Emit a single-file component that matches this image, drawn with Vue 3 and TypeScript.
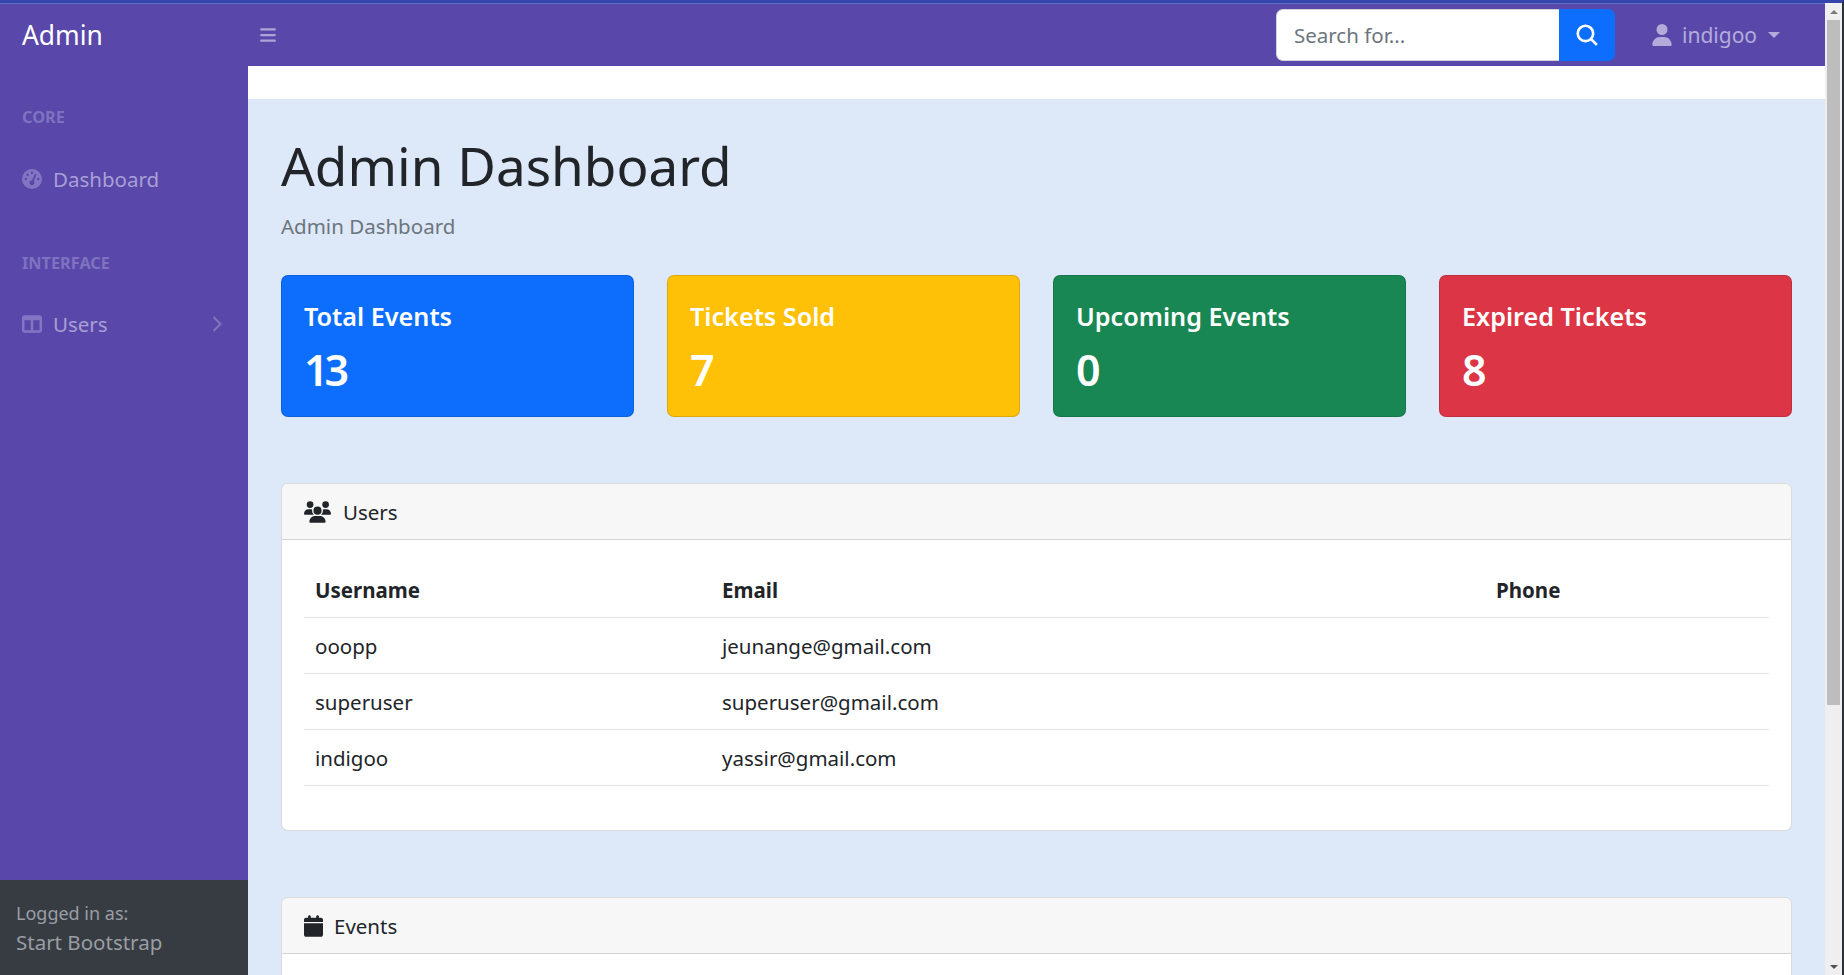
<script setup lang="ts">
interface Stat {
  title: string;
  value: number;
  tone: string;
}

const stats: Stat[] = [
  { title: "Total Events", value: 13, tone: "primary" },
  { title: "Tickets Sold", value: 7, tone: "warning" },
  { title: "Upcoming Events", value: 0, tone: "success" },
  { title: "Expired Tickets", value: 8, tone: "danger" }
];

const users = [
  { username: "ooopp", email: "jeunange@gmail.com", phone: "" },
  { username: "superuser", email: "superuser@gmail.com", phone: "" },
  { username: "indigoo", email: "yassir@gmail.com", phone: "" }
];
</script>

<template>
  <div class="window">
    <div class="page">
      <header class="topnav">
        <a class="brand">Admin</a>
        <button class="toggle" type="button" aria-label="Toggle sidebar">
          <svg viewBox="0 0 448 512" width="16" height="18" fill="currentColor"><path d="M0 96C0 78.3 14.3 64 32 64H416c17.7 0 32 14.3 32 32s-14.3 32-32 32H32C14.3 128 0 113.7 0 96zM0 256c0-17.7 14.3-32 32-32H416c17.7 0 32 14.3 32 32s-14.3 32-32 32H32c-17.7 0-32-14.3-32-32zM448 416c0 17.7-14.3 32-32 32H32c-17.7 0-32-14.3-32-32s14.3-32 32-32H416c17.7 0 32 14.3 32 32z" /></svg>
        </button>
        <form class="search" @submit.prevent>
          <input class="search-input" type="text" placeholder="Search for..." />
          <button class="search-btn" type="submit" aria-label="Search">
            <svg viewBox="0 0 20 20" width="22" height="22" fill="none" stroke="currentColor" stroke-width="2.4"><circle cx="8.6" cy="8.6" r="7" /><path d="M13.6 13.6 19 19" /></svg>
          </button>
        </form>
        <a class="user-menu">
          <svg viewBox="0 0 448 512" width="20" height="22" fill="currentColor"><path d="M224 256A128 128 0 1 0 224 0a128 128 0 1 0 0 256zm-45.7 48C79.8 304 0 383.8 0 482.3C0 498.7 13.3 512 29.7 512H418.3c16.4 0 29.7-13.3 29.7-29.7C448 383.8 368.2 304 269.7 304H178.3z" /></svg>
          <span>indigoo</span>
          <i class="caret"></i>
        </a>
      </header>

      <div class="body">
        <aside class="sidenav">
          <nav class="menu">
            <div class="menu-heading">CORE</div>
            <a class="menu-link">
              <svg class="menu-icon" viewBox="0 0 512 512" width="20" height="20" fill="currentColor"><path d="M0 256a256 256 0 1 1 512 0A256 256 0 1 1 0 256zM288 96a32 32 0 1 0 -64 0 32 32 0 1 0 64 0zM256 416c35.3 0 64-28.7 64-64c0-17.4-6.9-33.1-18.1-44.6L366 161.7c5.3-12.1-.2-26.3-12.3-31.6s-26.3 .2-31.6 12.3L257.9 288c-.6 0-1.3 0-1.9 0c-35.3 0-64 28.7-64 64s28.7 64 64 64zM176 144a32 32 0 1 0 -64 0 32 32 0 1 0 64 0zM96 288a32 32 0 1 0 0-64 32 32 0 1 0 0 64zm352-32a32 32 0 1 0 -64 0 32 32 0 1 0 64 0z" /></svg>
              <span>Dashboard</span>
            </a>
            <div class="menu-heading">INTERFACE</div>
            <a class="menu-link">
              <svg class="menu-icon" viewBox="0 0 512 512" width="20" height="20" fill="currentColor"><path d="M0 96C0 60.7 28.7 32 64 32H448c35.3 0 64 28.7 64 64V416c0 35.3-28.7 64-64 64H64c-35.3 0-64-28.7-64-64V96zm64 64V416H224V160H64zm384 0H288V416H448V160z" /></svg>
              <span>Users</span>
              <svg class="chevron" viewBox="0 0 10 16" width="10" height="16" fill="none" stroke="currentColor" stroke-width="2"><path d="m1.5 1 7 7-7 7" /></svg>
            </a>
          </nav>
          <div class="sidenav-footer">
            <div class="small">Logged in as:</div>
            <div>Start Bootstrap</div>
          </div>
        </aside>

        <main class="content">
          <div class="strip"></div>
          <div class="container">
            <h1>Admin Dashboard</h1>
            <p class="crumb">Admin Dashboard</p>

            <section class="stats">
              <div v-for="s in stats" :key="s.title" class="stat" :data-tone="s.tone">
                <div class="stat-title">{{ s.title }}</div>
                <div class="stat-value">{{ s.value }}</div>
              </div>
            </section>

            <section class="card users-card">
              <div class="card-header">
                <svg viewBox="0 0 640 512" width="27" height="22" fill="currentColor"><path d="M144 0a80 80 0 1 1 0 160A80 80 0 1 1 144 0zM512 0a80 80 0 1 1 0 160A80 80 0 1 1 512 0zM0 298.7C0 239.8 47.8 192 106.7 192h42.7c15.9 0 31 3.5 44.6 9.7c-1.3 7.2-1.9 14.7-1.9 22.3c0 38.2 16.8 72.5 43.3 96c-.2 0-.4 0-.7 0H21.3C9.6 320 0 310.4 0 298.7zM405.3 320c-.2 0-.4 0-.7 0c26.6-23.5 43.3-57.8 43.3-96c0-7.6-.7-15-1.9-22.3c13.6-6.3 28.7-9.7 44.6-9.7h42.7C592.2 192 640 239.8 640 298.7c0 11.8-9.6 21.3-21.3 21.3H405.3zM224 224a96 96 0 1 1 192 0 96 96 0 1 1 -192 0zM128 485.3C128 411.7 187.7 352 261.3 352H378.7C452.3 352 512 411.7 512 485.3c0 14.7-11.9 26.7-26.7 26.7H154.7c-14.7 0-26.7-11.9-26.7-26.7z" /></svg>
                <span>Users</span>
              </div>
              <div class="card-body">
                <table>
                  <thead>
                    <tr>
                      <th class="col-user">Username</th>
                      <th class="col-email">Email</th>
                      <th>Phone</th>
                    </tr>
                  </thead>
                  <tbody>
                    <tr v-for="u in users" :key="u.username">
                      <td>{{ u.username }}</td>
                      <td>{{ u.email }}</td>
                      <td>{{ u.phone }}</td>
                    </tr>
                  </tbody>
                </table>
              </div>
            </section>

            <section class="card events-card">
              <div class="card-header">
                <svg viewBox="0 0 448 512" width="19" height="22" fill="currentColor"><path d="M96 32V64H48C21.5 64 0 85.5 0 112v48H448V112c0-26.5-21.5-48-48-48H352V32c0-17.7-14.3-32-32-32s-32 14.3-32 32V64H160V32c0-17.7-14.3-32-32-32S96 14.3 96 32zM448 192H0V464c0 26.5 21.5 48 48 48H400c26.5 0 48-21.5 48-48V192z" /></svg>
                <span>Events</span>
              </div>
              <div class="card-body"></div>
            </section>
          </div>
        </main>
      </div>
    </div>

    <div class="scrollbar" aria-hidden="true">
      <i class="arrow up"></i>
      <div class="track"><div class="thumb"></div></div>
      <i class="arrow down"></i>
    </div>
  </div>
</template>

<style>
html,
body {
  margin: 0;
  overflow: hidden;
}
</style>

<style scoped>
* {
  box-sizing: border-box;
}

.window {
  width: 1844px;
  height: 975px;
  display: grid;
  grid-template-columns: 1825px 17px;
  grid-template-rows: 972px;
  border-top: 3px solid #3545ab;
  border-right: 2px solid #2b2f36;
  background: #dde8f8;
  overflow: hidden;
  font-family: "Noto Sans", "Open Sans", sans-serif;
  font-size: 20.5px;
  color: #212529;
}

.page {
  min-width: 0;
  display: flex;
  flex-direction: column;
}

.topnav {
  height: 63px;
  flex: none;
  display: flex;
  align-items: center;
  background: #5948aa;
  border-top: 1px solid #5f6fc4;
}

.brand {
  width: 248px;
  padding-left: 22px;
  color: #fff;
  font-size: 26.4px;
}

.toggle {
  padding: 0;
  margin-left: 12px;
  display: flex;
  border: 0;
  background: none;
  color: #ada4d6;
}

.search {
  margin-left: auto;
  display: flex;
  width: 339px;
  height: 52px;
}

.search-input {
  flex: 1;
  min-width: 0;
  padding: 0 17px;
  border: 1px solid #ced4da;
  border-right: 0;
  border-radius: 7px 0 0 7px;
  background: #fff;
  font: inherit;
  color: #212529;
}

.search-input::placeholder {
  color: #6c757d;
  opacity: 1;
}

.search-btn {
  width: 56px;
  display: flex;
  align-items: center;
  justify-content: center;
  padding: 0;
  border: 0;
  border-radius: 0 7px 7px 0;
  background: #0d6efd;
  color: #fff;
}

.user-menu {
  width: 210px;
  padding-left: 37px;
  display: flex;
  align-items: center;
  gap: 10px;
  color: #b3acda;
}

.user-menu span {
  font-size: 21px;
}

.caret {
  width: 0;
  height: 0;
  margin-left: 1px;
  border-top: 6px solid currentColor;
  border-left: 6.5px solid transparent;
  border-right: 6.5px solid transparent;
}

.body {
  flex: 1;
  min-height: 0;
  display: flex;
}

.sidenav {
  width: 248px;
  flex: none;
  display: flex;
  flex-direction: column;
  background: #5948aa;
  color: #a89fd6;
}

.menu {
  flex: 1;
}

.menu-heading {
  height: 82px;
  padding: 43px 22px 0;
  font-size: 16.3px;
  font-weight: 700;
  line-height: 20px;
  color: #7f72c0;
}

.menu-heading:first-child {
  height: 81px;
  padding-top: 41px;
}

.menu-link {
  height: 63px;
  padding: 0 26px 0 22px;
  display: flex;
  align-items: center;
  gap: 11px;
}

.menu-icon,
.chevron {
  color: #8276c3;
}

.chevron {
  margin-left: auto;
}

.sidenav-footer {
  height: 95px;
  flex: none;
  padding: 20px 16px;
  background: #373c43;
  color: #9a9ea3;
  line-height: 32px;
}

.small {
  font-size: 18px;
  line-height: 26px;
}

.content {
  flex: 1;
  min-width: 0;
  display: flex;
  flex-direction: column;
}

.strip {
  height: 33px;
  flex: none;
  background: #fff;
}

.container {
  padding: 0 33px;
}

h1 {
  margin: 33px 0 0;
  font-size: 53px;
  font-weight: 400;
  line-height: 68px;
}

.crumb {
  margin: 12px 0 0;
  color: #6c757d;
  line-height: 28px;
}

.stats {
  margin-top: 35px;
  display: grid;
  grid-template-columns: repeat(4, 1fr);
  gap: 33px;
}

.stat {
  height: 142px;
  padding: 22px;
  border: 1px solid rgba(0, 0, 0, 0.125);
  border-radius: 7px;
  color: #fff;
  font-weight: 600;
}

.stat[data-tone="primary"] {
  background: #0d6efd;
}

.stat[data-tone="warning"] {
  background: #ffc107;
}

.stat[data-tone="success"] {
  background: #198754;
}

.stat[data-tone="danger"] {
  background: #dc3545;
}

.stat-title {
  padding-top: 1px;
  font-size: 25.2px;
  line-height: 34px;
}

.stat-value {
  margin-top: 10px;
  font-size: 43px;
  letter-spacing: -4px;
  line-height: 54px;
}

.card {
  border: 1px solid rgba(0, 0, 0, 0.14);
  border-radius: 7px;
  background: #fff;
  overflow: hidden;
}

.users-card {
  height: 348px;
  margin-top: 66px;
}

.events-card {
  height: 200px;
  margin-top: 66px;
}

.card-header {
  height: 56px;
  padding: 0 22px;
  display: flex;
  align-items: center;
  gap: 11px;
  border-bottom: 1px solid rgba(0, 0, 0, 0.14);
  background: #f7f7f7;
}

.users-card .card-header {
  gap: 12px;
}

.card-body {
  padding: 22px;
}

table {
  width: 100%;
  border-collapse: collapse;
  table-layout: fixed;
}

.col-user {
  width: 407px;
}

.col-email {
  width: 774px;
}

th,
td {
  height: 56px;
  padding: 2px 11px 0;
  text-align: left;
  border-bottom: 1px solid #dee2e6;
}

th {
  height: 55px;
  font-weight: 700;
}

.scrollbar {
  display: flex;
  flex-direction: column;
  background: #efefef;
}

.arrow {
  height: 17px;
  flex: none;
  display: flex;
  align-items: center;
  justify-content: center;
}

.arrow.up::before,
.arrow.down::before {
  content: "";
  border-left: 4px solid transparent;
  border-right: 4px solid transparent;
}

.arrow.up::before {
  border-bottom: 4px solid #7a7a7a;
}

.arrow.down::before {
  border-top: 4px solid #505050;
}

.track {
  flex: 1;
  padding: 0 2px;
}

.thumb {
  height: 685px;
  background: #bdbdbd;
}
</style>
